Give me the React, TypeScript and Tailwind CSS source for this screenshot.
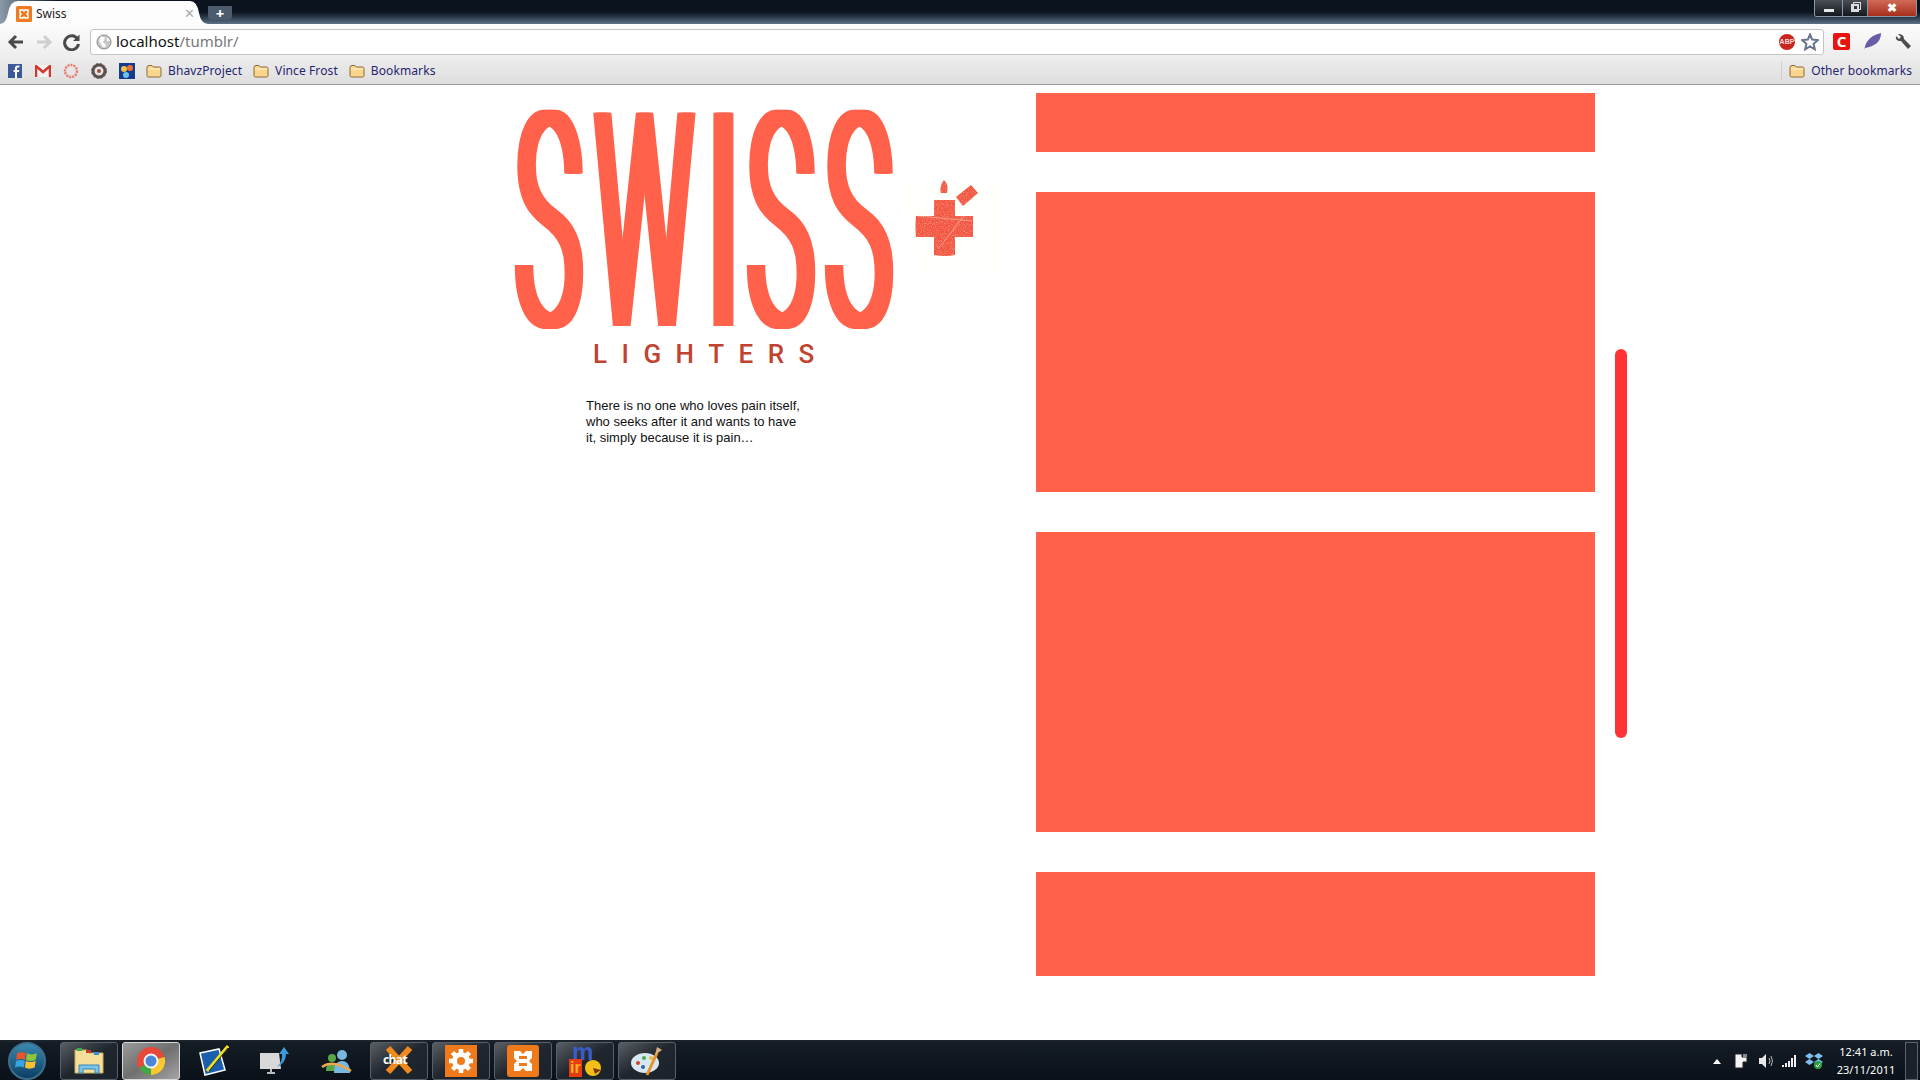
const bookmarks = ["BhavzProject", "Vince Frost", "Bookmarks"];

const logoLetters = [
  { char: "S", box: "w-[68px]", glyph: "-ml-[5px] scale-x-[0.37]" },
  { char: "W", box: "ml-[8px] w-[108px]", glyph: "-ml-[1px] scale-x-[0.36]" },
  { char: "I", box: "ml-[13px] w-[21px]", glyph: "-ml-[11px] scale-x-[0.4]" },
  { char: "S", box: "ml-[14px] w-[68px]", glyph: "-ml-[5px] scale-x-[0.37]" },
  { char: "S", box: "ml-[10px] w-[68px]", glyph: "-ml-[5px] scale-x-[0.37]" },
];

const Folder = () => (
  <svg width="16" height="14" viewBox="0 0 16 14" className="shrink-0">
    <path d="M1 3.5 Q1 1.5 3 1.5 H6 L7.5 3 H13.5 Q15 3 15 4.5 V11.5 Q15 13 13.5 13 H2.5 Q1 13 1 11.5 Z" fill="#f8d68c" stroke="#8a6a3a" />
    <path d="M2 5 H14" stroke="#fff1c9" />
  </svg>
);

const Arrow = ({ dir, color }: { dir: "left" | "right"; color: string }) => (
  <svg width="18" height="18" viewBox="0 0 18 18" fill="none" stroke={color} strokeWidth="3" className={dir === "right" ? "rotate-180" : ""}>
    <path d="M16 9 H4 M9 3 L3 9 L9 15" />
  </svg>
);

const BrowserChrome = () => (
  <div className="shrink-0 font-['Noto_Sans',sans-serif]">
    <div className="relative h-6 bg-gradient-to-b from-[#0a121d] via-[#0b1420] to-[#5d7189] overflow-hidden">
      <div className="absolute inset-y-0 left-0 w-[60px] bg-gradient-to-r from-[#8b9aa8] to-transparent" />
      <div className="relative flex h-6 items-end">
        <div className="relative h-[23px] w-[208px]">
          <svg width="208" height="23" viewBox="0 0 208 23" className="absolute inset-0">
            <path d="M0 23 Q6 23 8 12 Q10 0 18 0 H190 Q197 0 199 12 Q201 23 208 23 Z" fill="#fdfdfd" />
          </svg>
          <div className="relative flex h-[23px] items-center pl-4 pt-[2px] text-[12px] text-[#222]">
            <svg width="16" height="16" viewBox="0 0 16 16">
              <rect width="16" height="16" rx="1.5" fill="#ee7a22" />
              <path d="M4 4 H7 L8 5 L9 4 H12 V7 L11 8 L12 9 V12 H9 L8 11 L7 12 H4 V9 L5 8 L4 7 Z" fill="none" stroke="#fff" strokeWidth="1.5" />
            </svg>
            <span className="ml-[4px]">Swiss</span>
            <span className="ml-[117px] text-[13px] leading-none text-[#aaa]">✕</span>
          </div>
        </div>
        <div className="mb-[4px] flex h-[14px] w-6 items-center justify-center rounded-b-sm bg-[#4c5c6c] text-[15px] font-bold leading-none text-white">+</div>
      </div>
      <div className="absolute right-[3px] top-0 flex h-[17px] w-[103px] overflow-hidden rounded-b-[3px] border border-t-0 border-[#8c97a3]">
        <div className="flex w-[28px] items-center justify-center border-r border-[#8c97a3] bg-gradient-to-b from-[#4a4f55] to-[#14191f]">
          <div className="mt-1 h-[3px] w-[10px] bg-[#e8e8e8]" />
        </div>
        <div className="flex w-[25px] items-center justify-center border-r border-[#8c97a3] bg-gradient-to-b from-[#4a4f55] to-[#14191f]">
          <div className="relative h-[8px] w-[8px] border-2 border-[#dcdcdc]">
            <div className="absolute -right-[4px] -top-[4px] h-[8px] w-[8px] border border-[#dcdcdc]" />
          </div>
        </div>
        <div className="flex flex-1 items-center justify-center bg-gradient-to-b from-[#d06a58] to-[#a62e18] text-[12px] font-bold leading-none text-white">✖</div>
      </div>
    </div>
    <div className="flex h-[33px] items-center bg-gradient-to-b from-[#fcfcfc] to-[#ededed] pl-[7px] pt-[2px]">
      <Arrow dir="left" color="#4a4a4a" />
      <div className="ml-[10px]"><Arrow dir="right" color="#cfcfcf" /></div>
      <svg width="18" height="18" viewBox="0 0 18 18" fill="none" className="ml-[10px]">
        <path d="M14.5 6 A7 7 0 1 0 15.5 11" stroke="#4a4a4a" strokeWidth="3" />
        <path d="M16.5 1.5 V8 H10 Z" fill="#4a4a4a" />
      </svg>
      <div className="ml-[9px] flex h-[26px] w-[1734px] items-center rounded-[3px] border border-[#c4c4c4] bg-white pl-[5px] pr-[4px]">
        <svg width="16" height="16" viewBox="0 0 16 16">
          <circle cx="8" cy="8" r="7" fill="#c8c8c8" stroke="#888" />
          <path d="M5 2 L9 4 L7 8 L10 11 L8 14 L5 10 L3 7 Z M11 3 L14 7 L11 7 Z" fill="#fff" />
        </svg>
        <span className="ml-[4px] text-[15px] text-[#111]">localhost<span className="text-[#777]">/tumblr/</span></span>
        <div className="ml-auto flex items-center gap-[6px]">
          <div className="flex h-4 w-4 items-center justify-center rounded-full bg-[#c8261e] font-['Liberation_Sans',sans-serif] text-[7px] font-bold leading-none text-[#f6dcdc]">ABP</div>
          <svg width="18" height="18" viewBox="0 0 18 18">
            <path d="M9 1.5 L11.2 6.6 L16.8 7.1 L12.6 10.8 L13.8 16.3 L9 13.4 L4.2 16.3 L5.4 10.8 L1.2 7.1 L6.8 6.6 Z" fill="#fff" stroke="#67738f" strokeWidth="2" />
          </svg>
        </div>
      </div>
      <div className="ml-[9px] flex items-center">
        <div className="flex h-[17px] w-[17px] items-center justify-center rounded-[2px] bg-[#e8140f] text-[15px] font-bold leading-none text-white">C</div>
        <svg width="18" height="18" viewBox="0 0 18 18" className="ml-[14px]">
          <path d="M0 17 Q2 7 9 3 Q13 1 17 0 Q17 6 13 10 Q8 14 1 15 Z" fill="#6a5aa8" />
        </svg>
        <svg width="17" height="17" viewBox="0 0 17 17" fill="none" className="ml-[13px]">
          <path d="M3 1 L6 4 L4 6 L1 3 Q0 7 4 8 L6 8 L13 16 L16 13 L9 6 Q9 1 3 1 Z" fill="#4c4c4c" />
        </svg>
      </div>
    </div>
    <div className="flex h-7 items-center border-b border-[#9a9a9a] bg-gradient-to-b from-[#ededed] to-[#dedede] pl-2 text-[12px] tracking-[0.1px] text-[#25256f]">
      <svg width="14" height="14" viewBox="0 0 14 14" className="shrink-0">
        <rect width="14" height="14" fill="#3b5998" />
        <path d="M9 14 V8 H11 L11.3 6 H9 V4.5 Q9 3.5 10 3.5 H11.4 V1.5 H9.5 Q7 1.5 7 4 V6 H5.5 V8 H7 V14 Z" fill="#fff" />
      </svg>
      <svg width="16" height="12" viewBox="0 0 16 12" className="ml-[13px] shrink-0">
        <rect width="16" height="12" fill="#f2f2f2" />
        <path d="M1 12 V1 L8 7 L15 1 V12" fill="none" stroke="#d4372c" strokeWidth="2.5" />
      </svg>
      <svg width="16" height="16" viewBox="0 0 16 16" className="ml-[12px] shrink-0">
        <circle cx="8" cy="8" r="6" fill="none" stroke="#ea7b6c" strokeWidth="2.4" strokeDasharray="2 1" />
      </svg>
      <svg width="16" height="16" viewBox="0 0 16 16" className="ml-[12px] shrink-0">
        <circle cx="8" cy="8" r="6" fill="none" stroke="#59504c" strokeWidth="3" />
        <circle cx="8" cy="8" r="2" fill="#a44e3c" />
        <circle cx="8" cy="8" r="7.5" fill="none" stroke="#59504c" strokeDasharray="2 2" />
      </svg>
      <svg width="16" height="16" viewBox="0 0 16 16" className="ml-[12px] shrink-0">
        <rect width="16" height="16" fill="#163a8c" />
        <circle cx="5" cy="6" r="3" fill="#f6c34a" />
        <circle cx="11" cy="5" r="3" fill="#e8733a" />
        <circle cx="7" cy="12" r="3" fill="#6ac4ec" />
      </svg>
      {bookmarks.map((label) => (
        <div className="ml-[11px] flex items-center gap-[6px]" key={label}>
          <Folder />
          <span>{label}</span>
        </div>
      ))}
      <div className="ml-auto flex h-full items-center gap-[6px] pr-[8px]">
        <div className="mr-[1px] h-5 border-l border-[#cfcfcf]" />
        <Folder />
        <span>Other bookmarks</span>
      </div>
    </div>
  </div>
);

const Cross = () => (
  <svg width="100" height="110" viewBox="0 0 100 110" className="shrink-0">
    <defs>
      <filter id="grain">
        <feTurbulence type="fractalNoise" baseFrequency="0.9" numOctaves="2" result="n" />
        <feColorMatrix in="n" type="matrix" values="0 0 0 0 1  0 0 0 0 0.55  0 0 0 0 0.45  0 0 0 0.9 -0.4" result="c" />
        <feComposite in="c" in2="SourceAlpha" operator="in" result="d" />
        <feMerge><feMergeNode in="SourceGraphic" /><feMergeNode in="d" /></feMerge>
      </filter>
    </defs>
    <path d="M2 16 H100 V104 H20 Z" fill="#fffff8" opacity="0.6" />
    <g filter="url(#grain)" fill="#f2553f">
      <path d="M34 31 H55 V47 H73 V68 H55 V86 Q45 88 34 86 V68 H16 Q15 58 16 47 H34 Z" />
      <path d="M56 28 L71 16 L78 24 L63 37 Z" />
      <path d="M44 11 Q49 16 47 24 H41 Q39 17 44 11 Z" />
    </g>
    <path d="M38 80 L64 47 M18 47 L72 52" stroke="#f8c3a8" strokeWidth="0.6" fill="none" />
  </svg>
);

const Sidebar = () => (
  <div className="w-[1036px] shrink-0 pl-[515px] pt-[23px]">
    <div className="flex">
      <h1 className="flex h-[231px] w-[378px] font-['Roboto',sans-serif] text-[300px] font-light leading-[231px] text-[#ff614a]">
        {logoLetters.map((letter, index) => (
          <span className={letter.box} key={index}>
            <span className={`block origin-top-left whitespace-nowrap [text-shadow:4px_0_0_#ff614a,8px_0_0_#ff614a,12px_0_0_#ff614a,16px_0_0_#ff614a,20px_0_0_#ff614a,24px_0_0_#ff614a,28px_0_0_#ff614a,32px_0_0_#ff614a] ${letter.glyph}`}>{letter.char}</span>
          </span>
        ))}
      </h1>
      <div className="ml-[7px] mt-[61px]"><Cross /></div>
    </div>
    <div className="ml-[78px] mt-[3px] whitespace-nowrap font-['Roboto',sans-serif] text-[26px] font-medium leading-[24px] tracking-[14.5px] text-[#c0432f]">LIGHTERS</div>
    <p className="ml-[71px] mt-[32px] w-[225px] font-['Liberation_Sans',sans-serif] text-[13px] leading-4 text-[#111]">
      There is no one who loves pain itself,<br />who seeks after it and wants to have<br />it, simply because it is pain…
    </p>
  </div>
);

const panelHeights = ["h-[59px]", "h-[300px]", "h-[300px]", "h-[104px]"];

const TaskFrame = ({ active, children }: { active?: boolean; children: React.ReactNode }) => (
  <div className={`flex h-[38px] w-[58px] items-center justify-center rounded-[3px] border ${active ? "border-[#d8d8d8] bg-gradient-to-br from-[#9a9a9a] via-[#707070] to-[#a4a4a4]" : "border-[#566069] bg-gradient-to-br from-[#5a5f64] via-[#20262d] to-[#1a222b]"}`}>
    {children}
  </div>
);

const Taskbar = () => (
  <div className="flex h-10 shrink-0 items-center border-t-2 border-[#1c232b] bg-gradient-to-b from-[#141c25] to-[#0a1119] font-['Noto_Sans',sans-serif] text-white">
    <div className="ml-[8px] flex h-[38px] w-[38px] items-center justify-center rounded-full border-2 border-[#3d6e8e] bg-gradient-to-b from-[#3a8ab0] to-[#0c3f63]">
      <svg width="24" height="24" viewBox="0 0 22 22">
        <path d="M2 4 Q6 2 10 4 L9 10 Q5 8 1 10 Z" fill="#e8552a" />
        <path d="M11 4 Q15 6 20 4 L19 10 Q14 12 10 10 Z" fill="#8cc43c" />
        <path d="M1 11 Q5 9 9 11 L8 17 Q4 15 0 17 Z" fill="#35a4e0" />
        <path d="M10 11 Q14 13 19 11 L18 17 Q13 19 9 17 Z" fill="#f8c030" />
      </svg>
    </div>
    <div className="ml-[14px] flex items-center gap-1">
      <TaskFrame>
        <svg width="32" height="32" viewBox="0 0 32 32">
          <path d="M2 5 H14 L16 8 H30 V28 H2 Z" fill="#f6df98" stroke="#c9ae5c" />
          <path d="M4 3 H9 V6 H4 Z" fill="#3cae4a" />
          <path d="M13 5 H18 V8 H13 Z" fill="#c43c30" />
          <path d="M21 7 H26 V10 H21 Z" fill="#3c8cd8" />
          <path d="M6 28 V20 H26 V28 H22 V24 H10 V28 Z" fill="#79c4ea" stroke="#3d85b8" />
        </svg>
      </TaskFrame>
      <TaskFrame active>
        <svg width="28" height="28" viewBox="0 0 28 28">
          <circle cx="14" cy="14" r="14" fill="#e6483a" />
          <path d="M14 14 L2 21 A14 14 0 0 0 14 28 A14 14 0 0 0 27.5 10 Z" fill="#3fa748" />
          <path d="M14 14 L27.5 10 A14 14 0 0 1 14 28 Z" fill="#fbc833" />
          <circle cx="14" cy="14" r="6.5" fill="#4a85d8" stroke="#f2f2f2" strokeWidth="2" />
        </svg>
      </TaskFrame>
    </div>
    <svg width="32" height="32" viewBox="0 0 32 32" className="ml-[17px] shrink-0">
      <path d="M3 8 L22 4 L28 25 L8 30 Z" fill="#1a5fae" stroke="#fff" strokeWidth="1.5" />
      <path d="M10 26 L31 1" stroke="#f0e020" strokeWidth="3" />
      <path d="M12 26 L31 3" stroke="#222" strokeWidth="1" />
    </svg>
    <svg width="32" height="32" viewBox="0 0 32 32" className="ml-[28px] shrink-0">
      <path d="M3 8 H22 L24 24 H3 Z" fill="#d8d8d8" />
      <path d="M10 28 H18 M14 24 V28" stroke="#bbb" strokeWidth="2" />
      <path d="M20 22 Q26 16 25 9 H22 L27 2 L32 9 H29 Q29 18 20 22 Z" fill="#3d9ad8" />
    </svg>
    <svg width="32" height="32" viewBox="0 0 32 32" className="ml-[32px] shrink-0">
      <circle cx="11" cy="13" r="4" fill="#58a648" />
      <path d="M5 26 Q5 18 11 18 Q17 18 17 26 Z" fill="#58a648" />
      <circle cx="21" cy="10" r="5" fill="#78b8e0" />
      <path d="M13 28 Q13 16 21 16 Q29 16 29 28 Z" fill="#78b8e0" />
      <path d="M1 22 Q12 14 30 26" stroke="#e8a850" strokeWidth="2.5" fill="none" />
    </svg>
    <div className="ml-[17px] flex items-center gap-1">
      <TaskFrame>
        <div className="relative h-8 w-8">
          <svg width="32" height="32" viewBox="0 0 32 32">
            <path d="M5 3 L27 27 M27 3 L5 27" stroke="#f08a1c" strokeWidth="6" />
          </svg>
          <span className="absolute left-0 top-[8px] text-[12px] font-bold leading-[14px] tracking-tighter">chat</span>
        </div>
      </TaskFrame>
      <TaskFrame>
        <div className="flex h-8 w-8 items-center justify-center bg-[#ee7a1c]">
          <svg width="26" height="26" viewBox="0 0 26 26">
            <circle cx="13" cy="13" r="6.5" fill="none" stroke="#fff" strokeWidth="5" />
            <path d="M13 1 V25 M1 13 H25 M4.5 4.5 L21.5 21.5 M21.5 4.5 L4.5 21.5" stroke="#fff" strokeWidth="4.5" strokeDasharray="5 14" />
          </svg>
        </div>
      </TaskFrame>
      <TaskFrame>
        <div className="flex h-8 w-8 items-center justify-center rounded-[3px] bg-[#ee7a1c]">
          <svg width="26" height="26" viewBox="0 0 26 26">
            <path d="M4 3 H10 L13 6 L16 3 H22 V10 L19 13 L22 16 V23 H16 L13 20 L10 23 H4 V16 L7 13 L4 10 Z M9 8 V11 H17 V8 Z M9 15 V18 H17 V15 Z" fill="#fff" fillRule="evenodd" />
          </svg>
        </div>
      </TaskFrame>
      <TaskFrame>
        <div className="flex h-8 w-8 flex-col items-start font-['Liberation_Sans',sans-serif] font-bold">
          <span className="h-[14px] pl-[3px] text-[24px] leading-[14px] text-[#3c5cc8]">m</span>
          <div className="flex h-[18px] items-center">
            <span className="bg-[#e83c10] px-[1px] text-[16px] leading-[18px] text-[#ffb020]">ir</span>
            <svg width="16" height="16" viewBox="0 0 16 16" className="ml-[3px]">
              <circle cx="8" cy="8" r="8" fill="#f4c018" />
              <path d="M8 8 L16 10 L10 14 Z" fill="#7a3808" />
            </svg>
          </div>
        </div>
      </TaskFrame>
      <TaskFrame>
        <svg width="32" height="32" viewBox="0 0 32 32">
          <ellipse cx="14" cy="18" rx="14" ry="10" fill="#d8e8f0" />
          <circle cx="7" cy="18" r="2" fill="#d04030" />
          <circle cx="13" cy="13" r="2" fill="#50a850" />
          <circle cx="20" cy="13" r="2" fill="#e0c040" />
          <circle cx="12" cy="22" r="2" fill="#3060a0" />
          <path d="M16 30 L26 8" stroke="#e8912c" strokeWidth="3" />
          <path d="M24 10 L26 2 L31 5 Z" fill="#d8b080" />
        </svg>
      </TaskFrame>
    </div>
    <div className="ml-auto flex items-center">
      <div className="h-0 w-0 border-x-[4px] border-b-[5px] border-x-transparent border-b-white" />
      <svg width="14" height="16" viewBox="0 0 14 16" className="ml-[13px]">
        <path d="M1 1 H8 V4 H13 V9 H9 V15 H1 Z" fill="#f4f4f4" stroke="#222" />
        <path d="M10 1 V4 M12 1 V4" stroke="#fff" />
      </svg>
      <svg width="16" height="16" viewBox="0 0 16 16" fill="none" className="ml-[10px]">
        <path d="M1 5 H4 L8 1 V15 L4 11 H1 Z" fill="#e8e8e8" />
        <path d="M11 5 Q13 8 11 11 M13 3 Q16 8 13 13" stroke="#bbb" />
      </svg>
      <svg width="16" height="12" viewBox="0 0 16 12" className="ml-[8px]" fill="#f0f0f0">
        <rect x="0" y="10" width="2" height="2" />
        <rect x="3" y="8" width="2" height="4" />
        <rect x="6" y="6" width="2" height="6" />
        <rect x="9" y="3" width="2" height="9" />
        <rect x="12" y="0" width="2" height="12" />
      </svg>
      <svg width="18" height="16" viewBox="0 0 18 16" className="ml-[7px]">
        <path d="M4.5 0 L9 3 L4.5 6 L0 3 Z M13.5 0 L18 3 L13.5 6 L9 3 Z M4.5 6 L9 9 L4.5 12 L0 9 Z M13.5 6 L18 9 L13.5 12 L9 9 Z" fill="#7fc0f0" />
        <circle cx="13" cy="12" r="4" fill="#2aa040" />
        <path d="M11 12 L12.5 14 L15 10.5" stroke="#fff" fill="none" />
      </svg>
      <div className="ml-[11px] w-[64px] text-center text-[11px] leading-[18px]">
        <div>12:41 a.m.</div>
        <div>23/11/2011</div>
      </div>
      <div className="ml-[7px] h-[38px] w-[13px] border border-[#5a626a] bg-[#1a2129]" />
      <div className="w-[2px]" />
    </div>
  </div>
);

export default function App() {
  return (
    <div className="flex h-screen w-[1920px] flex-col overflow-hidden bg-white">
      <BrowserChrome />
      <main className="flex flex-1">
        <Sidebar />
        <div className="flex w-[559px] shrink-0 flex-col gap-10 pt-[8px]">
          {panelHeights.map((height, index) => (
            <div className={`${height} bg-[#ff614a]`} key={index} />
          ))}
        </div>
        <div className="ml-[20px] mt-[264px] h-[389px] w-3 rounded-full bg-[#ff3333]" />
      </main>
      <Taskbar />
    </div>
  );
}
